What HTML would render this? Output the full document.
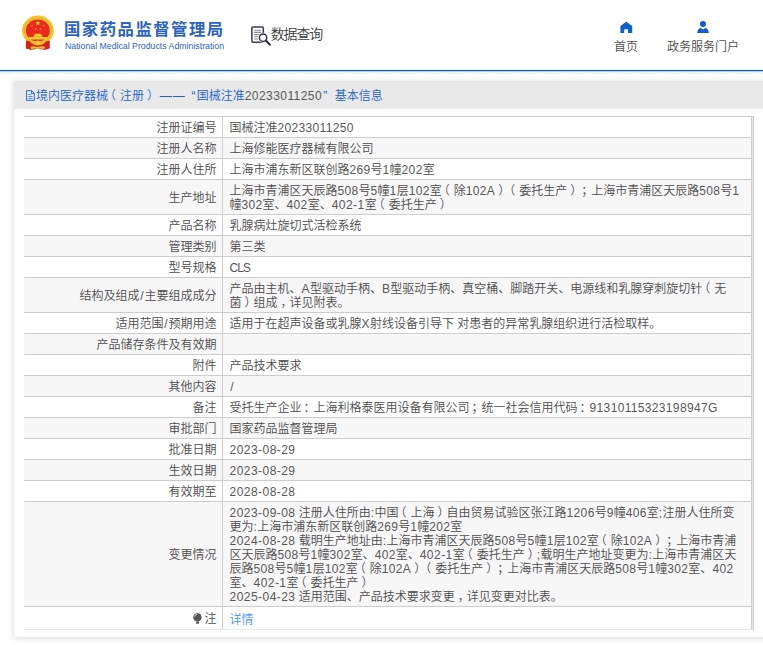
<!DOCTYPE html>
<html lang="zh-CN">
<head>
<meta charset="utf-8">
<title>国家药品监督管理局 数据查询</title>
<style>
*{box-sizing:border-box;margin:0;padding:0}
html,body{width:763px;height:645px;overflow:hidden;background:#fff}
body{font-weight:350;font-family:"Liberation Sans","Noto Sans CJK SC",sans-serif;font-size:12px;color:#4c4c4c;position:relative;text-spacing-trim:space-all}
i{font-style:normal;letter-spacing:.34px;color:#585858}
.hdr{position:absolute;left:0;top:0;width:763px;height:70px;background:#fff}
.emblem{position:absolute;left:18px;top:10px;width:40px;height:46px}
.cn{position:absolute;left:64px;top:17px;font-size:16.4px;font-weight:bold;color:#2c63bf;letter-spacing:1.46px;line-height:24px;white-space:nowrap}
.en{position:absolute;left:65px;top:40px;font-size:8.75px;color:#2c63bf;line-height:12px;white-space:nowrap}
.q{position:absolute;left:270.8px;top:24px;font-size:14px;color:#3a3a3a;line-height:20px;letter-spacing:-1.2px;white-space:nowrap}
.qi{position:absolute;left:249px;top:24px;width:24px;height:24px}
.nav{position:absolute;top:39px;font-size:12px;color:#4c4c4c;line-height:16px;white-space:nowrap}
.ic{position:absolute}
.blue{position:absolute;left:0;top:69px;width:763px;height:3px;background:linear-gradient(#eaf1fa 0,#eaf1fa 1px,#0d5fc1 1px,#0d5fc1 2px,#b4cdec 2px,#b4cdec 3px)}
.hatch{position:absolute;left:0;top:72px;width:763px;height:1px;background:repeating-linear-gradient(90deg,#f6f6f6 0,#f6f6f6 1px,#fff 1px,#fff 2px,#e6e6e6 2px,#e6e6e6 3px)}
.hatch2{position:absolute;left:0;top:73px;width:763px;height:1px;background:repeating-linear-gradient(90deg,#f6f6f6 0,#f6f6f6 1px,#e6e6e6 1px,#e6e6e6 2px,#fff 2px,#fff 3px)}
.panel{position:absolute;left:14px;top:81px;width:760px;height:556px;background:#fff;box-shadow:0 1px 6px rgba(0,0,0,.17)}
.ttl{position:absolute;left:0;top:0;width:100%;height:28px;border-bottom:1px solid #e9ebf3;background:#e9e9e9;color:#1b62c9;font-size:12px;line-height:27px;padding:2px 0 0 22px;white-space:nowrap}
.doc{position:absolute;left:11px;top:8px;width:11px;height:13px}
table{position:absolute;left:10px;top:35px;width:728px;border-collapse:collapse;table-layout:fixed}
td{border-top:1px solid #cecccc;border-bottom:1px solid #cecccc;border-right:1px solid #cecccc;font-size:12px;line-height:14px;padding:4px 5px 2px 7px;vertical-align:middle;color:#4c4c4c}
td.k{width:198px;text-align:right;padding:4px 5px 2px 0}
tr:nth-child(even) td{background:#f7f7f7}
tr:last-child td{border-bottom-color:#e6e8f2;padding-top:6px;padding-bottom:2px}
tr:last-child td.k{padding-top:5px;padding-bottom:3px}
.pl{position:relative;left:-4px}
.pr{position:relative;left:3px}
.pm{position:relative;left:2px}
.pc{position:relative;left:3px}
i.h{letter-spacing:.46px}
i.s{letter-spacing:0;margin:0 .9px 0 .8px}
.rb{position:absolute;left:738px;top:35px;width:2px;height:514px;background:#e6e6ee;border-right:1px solid #ccc;border-top:1px solid #ccc}
.bulb{display:inline-block;width:9px;height:11px;vertical-align:-1px;margin-right:2px}
a{color:#4593f0;text-decoration:none}
</style>
</head>
<body>
<div class="hdr">
<svg class="emblem" viewBox="18 10 40 46">
<path d="M26 40.500 L49.500 40.500 L49.600 48.300 L44.500 49.700 L37.800 48.700 L31.200 49.700 L25.900 48.300Z" fill="#d5231b"/>
<ellipse cx="37.900" cy="30.400" rx="15.900" ry="14.800" fill="#f5c42d"/>
<ellipse cx="37.900" cy="30.400" rx="13.700" ry="12.700" fill="none" stroke="#e9a91e" stroke-width=".7"/>
<ellipse cx="37.800" cy="30.500" rx="12" ry="11" fill="#e9291d"/>
<polygon points="37.90,20.30 38.58,22.26 40.66,22.30 39.00,23.56 39.60,25.55 37.90,24.36 36.20,25.55 36.80,23.56 35.14,22.30 37.22,22.26" fill="#f7d038"/>
<polygon points="32.10,24.40 32.38,25.21 33.24,25.23 32.56,25.75 32.81,26.57 32.10,26.08 31.39,26.57 31.64,25.75 30.96,25.23 31.82,25.21" fill="#f7d038"/><polygon points="44.00,24.40 44.28,25.21 45.14,25.23 44.46,25.75 44.71,26.57 44.00,26.08 43.29,26.57 43.54,25.75 42.86,25.23 43.72,25.21" fill="#f7d038"/><polygon points="35.70,27.90 35.98,28.71 36.84,28.73 36.16,29.25 36.41,30.07 35.70,29.58 34.99,30.07 35.24,29.25 34.56,28.73 35.42,28.71" fill="#f7d038"/><polygon points="40.50,27.90 40.78,28.71 41.64,28.73 40.96,29.25 41.21,30.07 40.50,29.58 39.79,30.07 40.04,29.25 39.36,28.73 40.22,28.71" fill="#f7d038"/>
<path d="M33.300 36.700 V35.400 h.9 l.7 -1.600 h6 l.7 1.600 h.9 V36.700Z M28.900 39.500 V37.100 H46.900 V39.500Z" fill="#f7cf35"/>
<path d="M26 40.500 L29.500 41.200 Q31.500 43.700 33 44.300 L32.300 49.400 L31.200 49.700 L25.900 48.300Z M49.500 40.500 L46.200 41.200 Q44.200 43.700 42.700 44.300 L43.400 49.400 L44.500 49.700 L49.600 48.300Z" fill="#d5231b"/>
<circle cx="37.700" cy="43" r="2.400" fill="#f7cc33"/>
<path d="M30.300 46.700 Q34 45.600 37.700 47 Q41.400 45.600 45.100 46.700 L44.300 49.200 Q41 48 37.700 49 Q34.400 48 31.100 49.200Z" fill="#f3bf2c"/>
</svg>
<div class="cn">国家药品监督管理局</div>
<div class="en">National Medical Products Administration</div>
<svg class="qi" viewBox="0 0 24 24">
<rect x="2.900" y="3" width="11.400" height="15.200" rx="1" fill="none" stroke="#3b3b50" stroke-width="1.500"/>
<path d="M5.200 6.200h7 M5.200 8.400h7 M5.200 10.600h7 M5.200 12.800h4.500 M5.200 15h3.500" stroke="#8a8a92" stroke-width="1.100"/>
<circle cx="14.100" cy="13.700" r="5" fill="#fff"/>
<circle cx="14.100" cy="13.700" r="3.700" fill="#fff" stroke="#2d2d44" stroke-width="1.400"/>
<path d="M16.800 16.500 L20.900 20.700" stroke="#2d2d44" stroke-width="2" stroke-linecap="round"/>
</svg>
<div class="q">数据查询</div>
<svg class="ic" style="left:620px;top:21px;width:13px;height:13px" viewBox="0 0 13 13"><path d="M6.300 .8 L12.200 5 V12 H8 V8.300 H4.200 V12 H.4 V5 Z" fill="#0f5fce"/></svg>
<div class="nav" style="left:614px">首页</div>
<svg class="ic" style="left:696px;top:20px;width:14px;height:14px" viewBox="0 0 14 14"><circle cx="7" cy="4" r="3" fill="#0f5fce"/><path d="M1.200 13.100 Q1.400 9.200 4.600 7.800 L7 9.600 L9.400 7.800 Q12.600 9.200 12.800 13.100 Z" fill="#0f5fce"/></svg>
<div class="nav" style="left:667px">政务服务门户</div>
</div>
<div class="blue"></div>
<div class="hatch"></div>
<div class="hatch2"></div>
<div class="panel">
<div class="ttl"><svg class="doc" viewBox="0 0 11 13"><path d="M1.500 1.600 H6.600 L9.400 4.400 V11.400 H1.500 Z M6.500 1.800 V4.500 H9.200" fill="none" stroke="#2468cf" stroke-width=".95"/><path d="M3.300 5.600h3 M3.300 7.500h4.400 M3.300 9.400h4.400" stroke="#4a84d8" stroke-width=".9"/></svg>境内医疗器械<span class="pl">（</span>注册<span class="pr">）</span><span style="margin-left:3.7px;letter-spacing:1px">——</span><span style="margin-left:5.7px">“</span><span style="margin-left:1.2px">国械注准</span><i style="letter-spacing:.45px">20233011250</i><span style="margin-left:1.2px">”</span><span style="margin-left:7.5px">基本信息</span></div>
<table>
<tr><td class="k">注册证编号</td><td>国械注准<i>20233011250</i></td></tr>
<tr><td class="k">注册人名称</td><td>上海修能医疗器械有限公司</td></tr>
<tr><td class="k">注册人住所</td><td>上海市浦东新区联创路<i>269</i>号<i>1</i>幢<i>202</i>室</td></tr>
<tr><td class="k">生产地址</td><td>上海市青浦区天辰路<i>508</i>号<i>5</i>幢<i>1</i>层<i>102</i>室<span class="pl">（</span>除<i>102A</i><span class="pr">）</span><span class="pl">（</span>委托生产<span class="pr">）</span><span class="pm">；</span>上海市青浦区天辰路<i>508</i>号<i>1</i><br>幢<i>302</i>室、<i>402</i>室、<i class="h">402-1</i>室<span class="pl">（</span>委托生产<span class="pr">）</span></td></tr>
<tr><td class="k">产品名称</td><td>乳腺病灶旋切式活检系统</td></tr>
<tr><td class="k">管理类别</td><td>第三类</td></tr>
<tr><td class="k">型号规格</td><td><i style="letter-spacing:-.9px">CLS</i></td></tr>
<tr><td class="k">结构及组成<i class="s">/</i>主要组成成分</td><td>产品由主机、<i>A</i>型驱动手柄、<i>B</i>型驱动手柄、真空桶、脚踏开关、电源线和乳腺穿刺旋切针<span class="pl">（</span>无<br>菌<span class="pr">）</span>组成<span class="pc">，</span>详见附表。</td></tr>
<tr><td class="k">适用范围<i class="s">/</i>预期用途</td><td>适用于在超声设备或乳腺<i>X</i>射线设备引导下 对患者的异常乳腺组织进行活检取样。</td></tr>
<tr><td class="k">产品储存条件及有效期</td><td></td></tr>
<tr><td class="k">附件</td><td>产品技术要求</td></tr>
<tr><td class="k">其他内容</td><td><i class="s">/</i></td></tr>
<tr><td class="k">备注</td><td>受托生产企业<span class="pm">：</span>上海利格泰医用设备有限公司<span class="pm">；</span>统一社会信用代码<span class="pm">：</span><i>91310115323198947G</i></td></tr>
<tr><td class="k">审批部门</td><td>国家药品监督管理局</td></tr>
<tr><td class="k">批准日期</td><td><i class="h">2023-08-29</i></td></tr>
<tr><td class="k">生效日期</td><td><i class="h">2023-08-29</i></td></tr>
<tr><td class="k">有效期至</td><td><i class="h">2028-08-28</i></td></tr>
<tr><td class="k">变更情况</td><td><i class="h">2023-09-08</i> 注册人住所由<i>:</i>中国<span class="pl">（</span>上海<span class="pr">）</span>自由贸易试验区张江路<i>1206</i>号<i>9</i>幢<i>406</i>室<i>;</i>注册人住所变<br>更为<i>:</i>上海市浦东新区联创路<i>269</i>号<i>1</i>幢<i>202</i>室<br><i class="h">2024-08-28</i> 载明生产地址由<i>:</i>上海市青浦区天辰路<i>508</i>号<i>5</i>幢<i>1</i>层<i>102</i>室<span class="pl">（</span>除<i>102A</i><span class="pr">）</span><span class="pm">；</span>上海市青浦<br>区天辰路<i>508</i>号<i>1</i>幢<i>302</i>室、<i>402</i>室、<i class="h">402-1</i>室<span class="pl">（</span>委托生产<span class="pr">）</span><i>;</i>载明生产地址变更为<i>:</i>上海市青浦区天<br>辰路<i>508</i>号<i>5</i>幢<i>1</i>层<i>102</i>室<span class="pl">（</span>除<i>102A</i><span class="pr">）</span><span class="pl">（</span>委托生产<span class="pr">）</span><span class="pm">；</span>上海市青浦区天辰路<i>508</i>号<i>1</i>幢<i>302</i>室、<i>402</i><br>室、<i class="h">402-1</i>室<span class="pl">（</span>委托生产<span class="pr">）</span><br><i class="h">2025-04-23</i> 适用范围、产品技术要求变更<span class="pc">，</span>详见变更对比表。</td></tr>
<tr><td class="k"><svg class="bulb" viewBox="0 0 9 11"><circle cx="4.4" cy="4.3" r="4.1" fill="#555"/><rect x="3" y="8.6" width="3" height="2.2" rx=".6" fill="#555"/><path d="M1.6 3.6 A3 3 0 0 1 4 1.3" stroke="#e4e4e4" stroke-width="1.1" fill="none"/></svg>注</td><td><a>详情</a></td></tr>
</table>
<div class="rb"></div>
</div>
</body>
</html>
